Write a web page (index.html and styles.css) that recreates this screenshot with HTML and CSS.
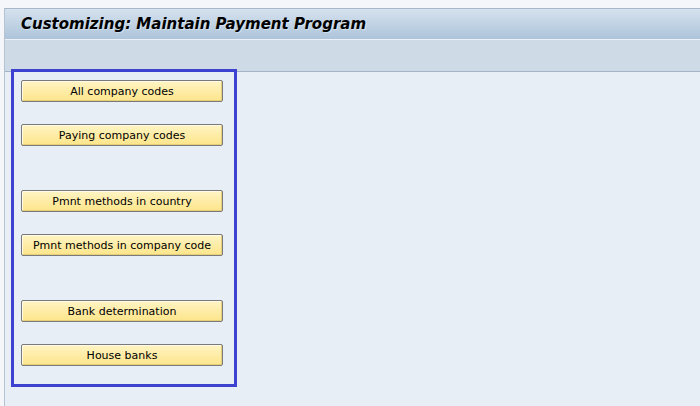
FILE: index.html
```html
<!DOCTYPE html>
<html lang="en">
<head>
  <meta charset="UTF-8">
  <title>Customizing: Maintain Payment Program</title>
  <link rel="stylesheet" href="styles.css">
</head>
<body>
  <div class="window">
    <div class="titlebar">
      <h1>Customizing: Maintain Payment Program</h1>
    </div>
    <div class="toolbar"></div>

    <div class="content">
      <div class="panel">
        <div class="group">
          <button>All company codes</button>
          <button>Paying company codes</button>
        </div>
        <div class="group">
          <button>Pmnt methods in country</button>
          <button>Pmnt methods in company code</button>
        </div>
        <div class="group">
          <button>Bank determination</button>
          <button>House banks</button>
        </div>
      </div>
    </div>
  </div>
</body>
</html>
```

FILE: styles.css
```css
html, body {
  margin: 0;
  height: 100%;
}
body {
  background-color: #f4f6f9;
  font-family: "DejaVu Sans", Tahoma, sans-serif;
  overflow: hidden;
}
.window {
  margin: 8px 0 0 4px;
  border-left: 1px solid #b6c4d2;
  border-top: 1px solid #a9b8c8;
  height: calc(100% - 9px);
  display: flex;
  flex-direction: column;
}
.titlebar {
  height: 30px;
  background: linear-gradient(#d5e2ee, #adc4da);
  border-bottom: 1px solid #eaf1f8;
  display: flex;
  align-items: center;
  padding-left: 16px;
}
h1 {
  margin: 0;
  font-size: 15px;
  font-weight: bold;
  font-style: italic;
  color: #000;
  text-shadow: 1px 1px 0 rgba(255, 255, 255, 0.4);
}
.toolbar {
  height: 31px;
  background-color: #cedbe6;
  border-bottom: 1px solid #a4b4c6;
}
.content {
  flex: 1;
  background-color: #e8eef5;
}
.panel {
  display: flex;
  flex-direction: column;
  gap: 44px;
  width: 202px;
  margin: -3px 0 0 6px;
  padding: 8px 11px 18px 7px;
  border: 3px solid #3d42cf;
}
.group {
  display: flex;
  flex-direction: column;
  gap: 22px;
}
button {
  width: 202px;
  height: 22px;
  padding: 0;
  font-family: "DejaVu Sans", Tahoma, sans-serif;
  font-size: 11px;
  color: #000;
  background: linear-gradient(#fff4c4, #fde58a);
  border: 1px solid #7a7a7a;
  border-radius: 2px;
  box-shadow: inset -1px -1px 0 #e6cf78, inset 1px 1px 0 #fffbe8;
}
```
